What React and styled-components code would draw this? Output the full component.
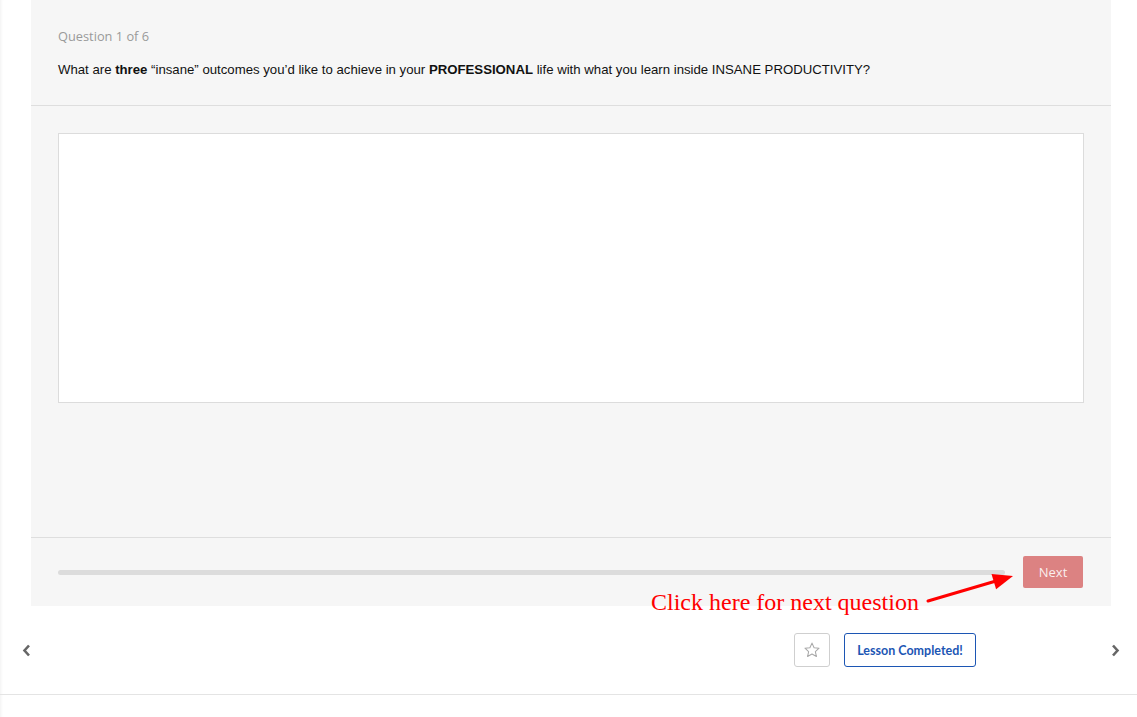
import React from "react";
import styled, { createGlobalStyle } from "styled-components";

const Global = createGlobalStyle`
  html, body { margin: 0; padding: 0; background: #fff; }
  body { font-family: "Liberation Sans", Arial, sans-serif; }
  * { box-sizing: border-box; }
`;

const Page = styled.div`
  position: relative;
  width: 1137px;
  min-height: 717px;
  background: #fff;
  box-shadow: inset 3px 0 3px -2px rgba(0, 0, 0, 0.06);
`;

const PanelWrap = styled.div`
  padding: 0 26px 0 31px;
`;

const Panel = styled.div`
  background: #f6f6f6;
  display: flex;
  flex-direction: column;
`;

const Header = styled.div`
  padding: 28px 27px 27px;
  border-bottom: 1px solid #dedede;
  display: flex;
  flex-direction: column;
  gap: 18px;
`;

const Counter = styled.div`
  font-family: "Open Sans", sans-serif;
  font-size: 12.8px;
  color: #9a9a9a;
  line-height: 16px;
`;

const QuestionText = styled.div`
  font-family: "Liberation Sans", Arial, sans-serif;
  font-size: 13.2px;
  color: #111;
  line-height: 16px;
  b { font-weight: 700; }
`;

const Body = styled.div`
  padding: 27px 27px 134px;
  border-bottom: 1px solid #dedede;
`;

const Answer = styled.textarea`
  display: block;
  width: 100%;
  height: 270px;
  background: #fff;
  border: 1px solid #dcdcdc;
  border-radius: 0;
  resize: none;
  outline: none;
  margin: 0;
`;

const Footer = styled.div`
  display: flex;
  align-items: center;
  gap: 18px;
  padding: 18px 28px 18px 27px;
`;

const Progress = styled.div`
  flex: 1;
  height: 5px;
  border-radius: 3px;
  background: #dcdcdc;
`;

const NextButton = styled.button`
  width: 60px;
  height: 32px;
  border: none;
  border-radius: 2px;
  background: #dc8282;
  color: rgba(255, 255, 255, 0.88);
  font-family: "Open Sans", sans-serif;
  font-size: 13px;
  padding: 0;
  cursor: pointer;
`;

const Nav = styled.div`
  display: flex;
  align-items: center;
  height: 89px;
  border-bottom: 1px solid #e4e4e4;
  padding: 0 16px 0 20px;
`;

const Chevron = styled.button`
  width: 12px;
  height: 16px;
  border: none;
  background: none;
  padding: 0;
  display: flex;
  align-items: center;
  justify-content: center;
  color: #666;
`;

const Actions = styled.div`
  display: flex;
  align-items: center;
  gap: 14px;
  margin-left: auto;
  margin-right: 133px;
`;

const StarButton = styled.button`
  width: 36px;
  height: 34px;
  border: 1px solid #cfcfcf;
  border-radius: 3px;
  background: #fff;
  display: flex;
  align-items: center;
  justify-content: center;
  padding: 0;
`;

const CompleteButton = styled.button`
  width: 132px;
  height: 34px;
  border: 1px solid #1c56b4;
  border-radius: 3px;
  background: #fff;
  color: #1c56b4;
  font-family: Lato, sans-serif;
  font-weight: 700;
  font-size: 12.5px;
  padding: 0;
`;

const Annotation = styled.div`
  position: absolute;
  left: 651px;
  top: 588px;
  font-family: "Liberation Serif", "Times New Roman", serif;
  font-size: 24px;
  line-height: 28px;
  color: #ff0000;
  white-space: nowrap;
`;

const Arrow = styled.svg`
  position: absolute;
  left: 0;
  top: 0;
  overflow: visible;
`;

export default function App() {
  return (
    <>
      <Global />
      <Page>
        <PanelWrap>
          <Panel>
            <Header>
              <Counter>Question 1 of 6</Counter>
              <QuestionText>
                What are <b>three</b> “insane” outcomes you’d like to achieve in your{" "}
                <b>PROFESSIONAL</b> life with what you learn inside INSANE PRODUCTIVITY?
              </QuestionText>
            </Header>
            <Body>
              <Answer aria-label="Answer" />
            </Body>
            <Footer>
              <Progress />
              <NextButton>Next</NextButton>
            </Footer>
          </Panel>
        </PanelWrap>
        <Nav>
          <Chevron aria-label="Previous">
            <svg width="9" height="13" viewBox="0 0 9 13">
              <path d="M7 1.5 L2.5 6.5 L7 11.5" fill="none" stroke="currentColor" strokeWidth="2.6" />
            </svg>
          </Chevron>
          <Actions>
            <StarButton aria-label="Favorite">
              <svg width="18" height="18" viewBox="0 0 24 24">
                <path
                  d="M12 2.8l2.8 6.1 6.6.7-4.9 4.5 1.4 6.6L12 17.4l-5.9 3.3 1.4-6.6-4.9-4.5 6.6-.7z"
                  fill="none"
                  stroke="#a8a8a8"
                  strokeWidth="1.4"
                  strokeLinejoin="round"
                />
              </svg>
            </StarButton>
            <CompleteButton>Lesson Completed!</CompleteButton>
          </Actions>
          <Chevron aria-label="Next lesson">
            <svg width="9" height="13" viewBox="0 0 9 13">
              <path d="M2 1.5 L6.5 6.5 L2 11.5" fill="none" stroke="currentColor" strokeWidth="2.6" />
            </svg>
          </Chevron>
        </Nav>
        <Annotation>Click here for next question</Annotation>
        <Arrow width="1137" height="717" viewBox="0 0 1137 717" pointerEvents="none">
          <line x1="928" y1="601" x2="996" y2="581" stroke="#ff0000" strokeWidth="3" strokeLinecap="round" />
          <polygon points="1013,576 991.5,573.9 996.1,589.3" fill="#ff0000" />
        </Arrow>
      </Page>
    </>
  );
}
